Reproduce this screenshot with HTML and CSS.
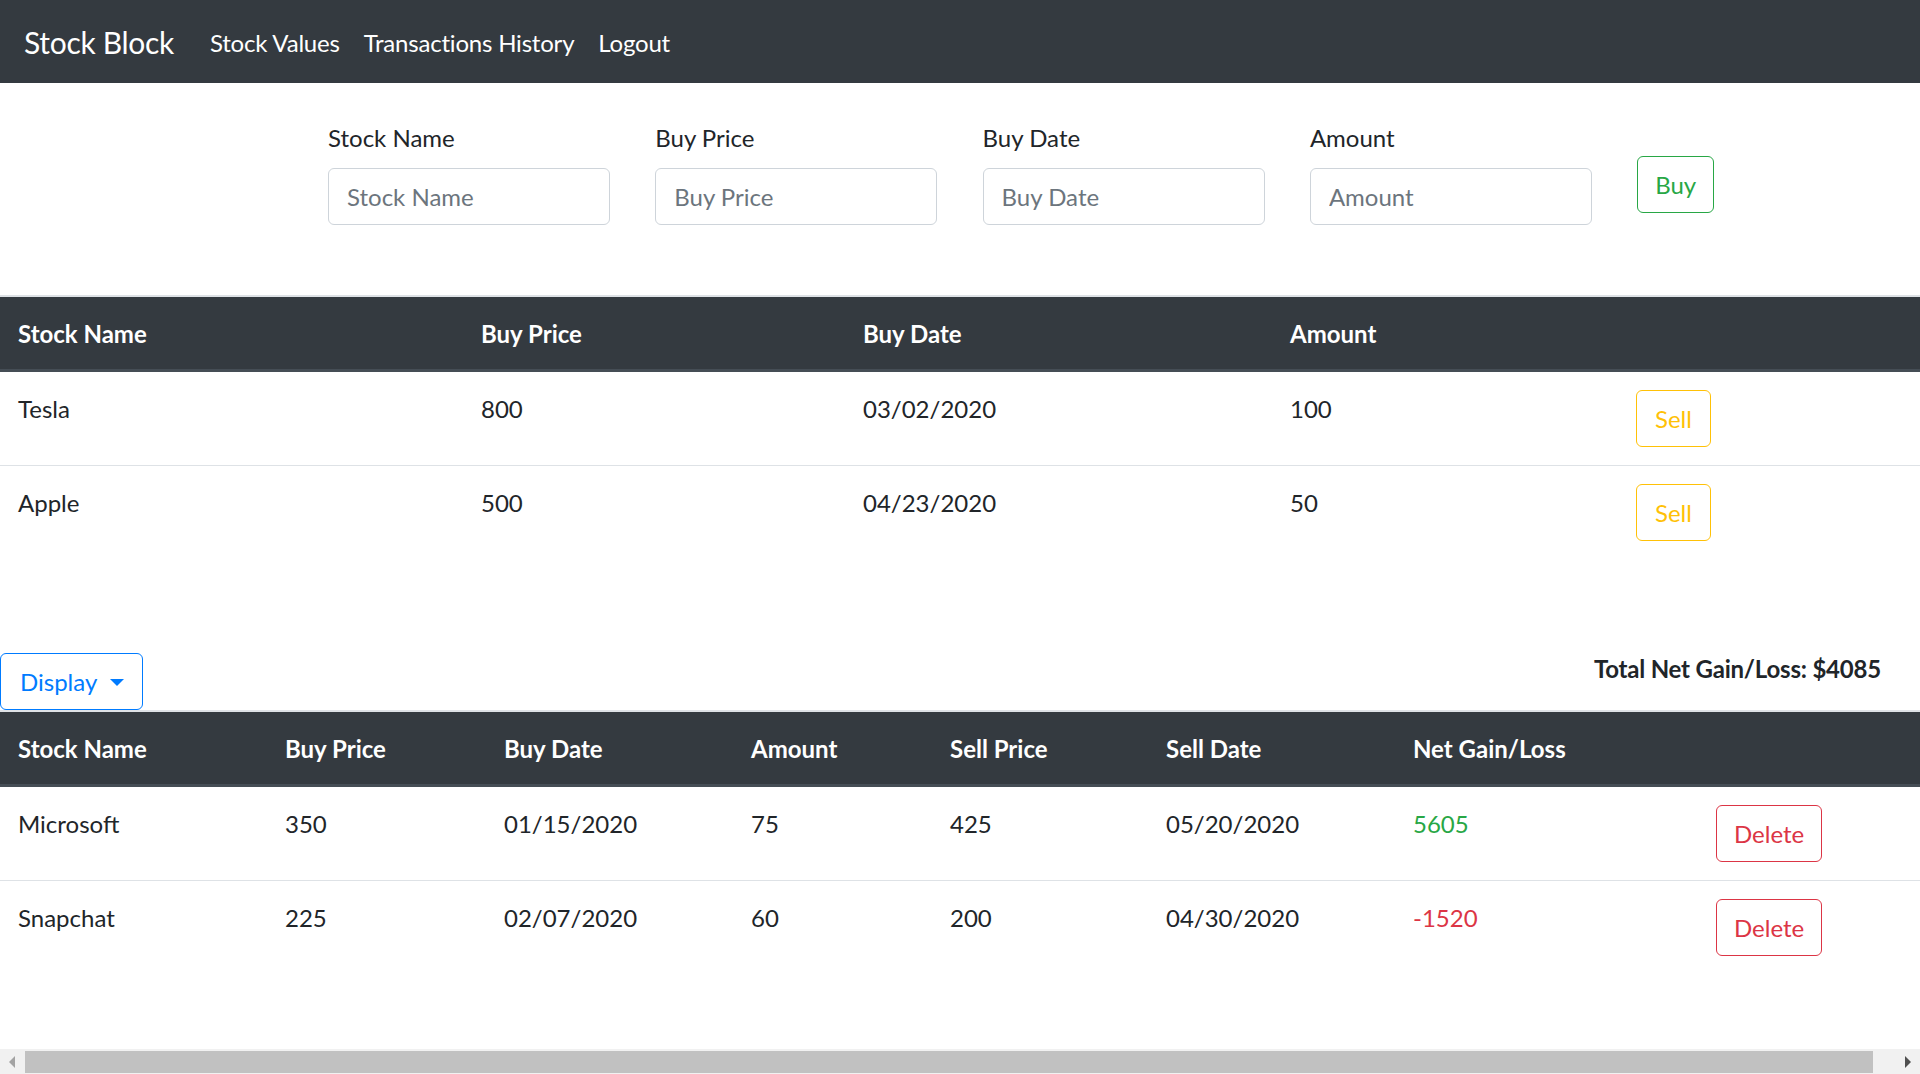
FILE: index.html
```html
<!DOCTYPE html>
<html lang="en">
<head>
<meta charset="utf-8">
<title>Stock Block</title>
<link rel="stylesheet" href="styles.css">
</head>
<body>
<nav class="navbar">
  <a class="brand" href="#">Stock Block</a>
  <a class="nav-link" href="#">Stock Values</a>
  <a class="nav-link" href="#">Transactions History</a>
  <a class="nav-link" href="#">Logout</a>
</nav>

<form class="buy-form">
  <div class="field">
    <label class="field-label">Stock Name</label>
    <input class="field-input" type="text" placeholder="Stock Name">
  </div>
  <div class="field">
    <label class="field-label">Buy Price</label>
    <input class="field-input" type="text" placeholder="Buy Price">
  </div>
  <div class="field">
    <label class="field-label">Buy Date</label>
    <input class="field-input" type="text" placeholder="Buy Date">
  </div>
  <div class="field">
    <label class="field-label">Amount</label>
    <input class="field-input" type="text" placeholder="Amount">
  </div>
  <button class="btn btn-success" type="button">Buy</button>
</form>

<table class="data-table holdings">
  <colgroup>
    <col class="h1"><col class="h2"><col class="h3"><col class="h4"><col class="h5">
  </colgroup>
  <thead>
    <tr><th>Stock Name</th><th>Buy Price</th><th>Buy Date</th><th>Amount</th><th></th></tr>
  </thead>
  <tbody>
    <tr><td>Tesla</td><td>800</td><td>03/02/2020</td><td>100</td><td><button class="btn btn-warning" type="button">Sell</button></td></tr>
    <tr><td>Apple</td><td>500</td><td>04/23/2020</td><td>50</td><td><button class="btn btn-warning" type="button">Sell</button></td></tr>
  </tbody>
</table>

<div class="history-bar">
  <button class="btn btn-primary dropdown" type="button">Display<span class="caret"></span></button>
  <div class="total">Total Net Gain/Loss: $4085</div>
</div>

<table class="data-table history">
  <colgroup>
    <col class="t1"><col class="t2"><col class="t3"><col class="t4"><col class="t5"><col class="t6"><col class="t7"><col class="t8">
  </colgroup>
  <thead>
    <tr><th>Stock Name</th><th>Buy Price</th><th>Buy Date</th><th>Amount</th><th>Sell Price</th><th>Sell Date</th><th>Net Gain/Loss</th><th></th></tr>
  </thead>
  <tbody>
    <tr><td>Microsoft</td><td>350</td><td>01/15/2020</td><td>75</td><td>425</td><td>05/20/2020</td><td class="gain">5605</td><td><button class="btn btn-danger" type="button">Delete</button></td></tr>
    <tr><td>Snapchat</td><td>225</td><td>02/07/2020</td><td>60</td><td>200</td><td>04/30/2020</td><td class="loss">-1520</td><td><button class="btn btn-danger" type="button">Delete</button></td></tr>
  </tbody>
</table>

<div class="hscroll">
  <div class="sb-btn"><span class="arrow-left"></span></div>
  <div class="sb-track"><div class="sb-thumb"></div></div>
  <div class="sb-btn"><span class="arrow-right"></span></div>
</div>
</body>
</html>
```

FILE: styles.css
```css
* { box-sizing: border-box; }

html, body {
  margin: 0;
  padding: 0;
  background: #fff;
}

body {
  font-family: "Segoe UI", Lato, "Liberation Sans", sans-serif;
  font-size: 24px;
  line-height: 36px;
  color: #212529;
  overflow: hidden;
  height: 1074px;
}

/* navbar */
.navbar {
  height: 83px;
  background: #343a40;
  display: flex;
  align-items: center;
  padding: 2px 24px 0;
}
.brand {
  font-size: 30px;
  color: #fff;
  text-decoration: none;
  margin-right: 24px;
  line-height: 45px;
  letter-spacing: -0.3px;
}
.nav-link {
  color: #fff;
  text-decoration: none;
  padding: 0 12px;
  letter-spacing: -0.2px;
}

/* form */
.buy-form {
  display: flex;
  align-items: center;
  gap: 45.3px;
  padding-left: 328px;
  margin: 37px 0 0 0;
}
.field {
  width: 282px;
  padding-bottom: 24px;
}
.field-label {
  display: block;
  margin-bottom: 12px;
}
.field-input {
  display: block;
  width: 100%;
  height: 57px;
  padding: 9px 18px;
  font: inherit;
  color: #495057;
  border: 1px solid #ced4da;
  border-radius: 6px;
  background: #fff;
}
.field-input::placeholder { color: #6c757d; }

/* buttons */
.btn {
  font: inherit;
  line-height: 36px;
  padding: 9.5px 18px;
  background: transparent;
  border: 1px solid;
  border-radius: 6px;
  cursor: pointer;
  white-space: nowrap;
}
.btn-success { color: #28a745; border-color: #28a745; padding: 9.5px 17px; }
.btn-warning { color: #ffc107; border-color: #ffc107; }
.btn-danger { color: #dc3545; border-color: #dc3545; padding: 9.5px 17px; }
.btn-primary { color: #007bff; border-color: #007bff; }

/* tables */
.data-table {
  width: 1920px;
  border-collapse: collapse;
  table-layout: fixed;
}
.data-table th {
  background: #343a40;
  color: #fff;
  font-weight: 700;
  text-align: left;
  padding: 19px 18px 17px;
  border-top: 2px solid #dee2e6;
  border-bottom: 3px solid #454d55;
}
.data-table td {
  padding: 19px 18px 18px;
  vertical-align: top;
  border-top: 1px solid #dee2e6;
}
.data-table td .btn { display: block; margin-top: -1px; }
.data-table tbody tr:first-child td { border-top: none; }

.holdings { margin-top: 46px; }
.holdings .h1 { width: 463px; }
.holdings .h2 { width: 382px; }
.holdings .h3 { width: 427px; }
.holdings .h4 { width: 346px; }
.holdings .h5 { width: 302px; }

.history .t1 { width: 267px; }
.history .t2 { width: 219px; }
.history .t3 { width: 247px; }
.history .t4 { width: 199px; }
.history .t5 { width: 216px; }
.history .t6 { width: 247px; }
.history .t7 { width: 303px; }
.history .t8 { width: 222px; }

.gain { color: #28a745; }
.loss { color: #dc3545; }

/* history bar */
.history-bar {
  display: flex;
  justify-content: space-between;
  align-items: flex-start;
  margin-top: 94px;
}
.dropdown {
  display: flex;
  align-items: center;
  width: 143px;
  padding-left: 19px;
  padding-right: 0;
}
.caret {
  display: inline-block;
  margin-left: 13px;
  margin-top: 1px;
  border-top: 7px solid #007bff;
  border-left: 7px solid transparent;
  border-right: 7px solid transparent;
}
.total {
  font-weight: 700;
  margin-right: 39px;
  margin-top: -2px;
  letter-spacing: -0.2px;
}

/* horizontal scrollbar (overlay at bottom of window) */
.hscroll {
  position: fixed;
  left: 0;
  right: 0;
  bottom: 0;
  height: 25px;
  background: #f1f1f1;
  display: flex;
}
.sb-btn {
  width: 24px;
  display: flex;
  align-items: center;
  justify-content: center;
}
.sb-track {
  flex: 1;
  padding: 2px 23px 1px 1px;
  display: flex;
}
.sb-thumb {
  flex: 1;
  background: #c1c1c1;
}
.arrow-left {
  border-right: 6px solid #a3a3a3;
  border-top: 6px solid transparent;
  border-bottom: 6px solid transparent;
}
.arrow-right {
  border-left: 6px solid #505050;
  border-top: 6px solid transparent;
  border-bottom: 6px solid transparent;
}
```
